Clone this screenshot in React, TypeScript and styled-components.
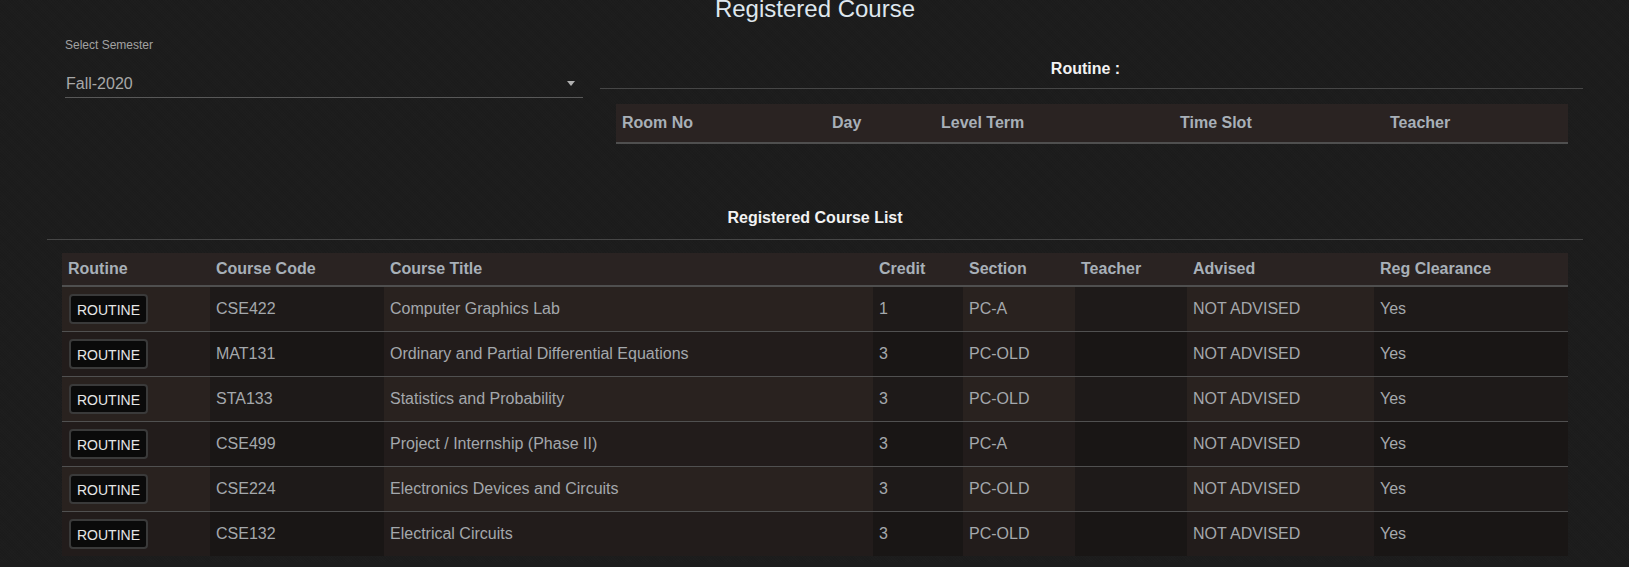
import React from "react";
import styled, { createGlobalStyle } from "styled-components";

const GlobalStyle = createGlobalStyle`
  html, body {
    margin: 0;
    padding: 0;
    background: #1c1c1c;
  }
  body {
    font-family: "Liberation Sans", Arial, sans-serif;
    color: #a4a8ac;
    overflow: hidden;
  }
  * { box-sizing: border-box; }
`;

const Page = styled.div`
  width: 100%;
  min-height: 567px;
  padding: 0 46px 0 47px;
  background-color: #1c1c1c;
  background-image:
    repeating-linear-gradient(45deg, rgba(255,255,255,0.008) 0 1px, transparent 1px 2px),
    repeating-linear-gradient(-45deg, rgba(0,0,0,0.04) 0 1px, transparent 1px 2px);
`;

const Title = styled.h3`
  margin: -5px 0 0;
  font-size: 24px;
  line-height: 28px;
  font-weight: 400;
  text-align: center;
  color: #dfe7ee;
`;

const TopRow = styled.div`
  display: flex;
`;

const LeftCol = styled.div`
  width: 553px;
  padding: 15px 17px 0 18px;
`;

const RightCol = styled.div`
  flex: 1;
  padding-top: 37px;
`;

const Label = styled.div`
  font-size: 12px;
  line-height: 14px;
  color: #a2a2a2;
`;

const SelectBox = styled.div`
  margin-top: 16px;
  padding: 6px 0 4px 1px;
  display: flex;
  align-items: center;
  justify-content: space-between;
  border-bottom: 1px solid #585858;
  font-size: 16px;
  line-height: 19px;
  color: #a8a8a8;
`;

const Caret = styled.span`
  width: 0;
  height: 0;
  margin-right: 8px;
  border-left: 4.5px solid transparent;
  border-right: 4.5px solid transparent;
  border-top: 5px solid #b0b0b0;
`;

const SectionHeading = styled.div<{ $pad: number; $shift?: number }>`
  font-size: 16px;
  line-height: 18px;
  font-weight: 700;
  text-align: center;
  color: #f2f2f2;
  padding-bottom: ${(p) => p.$pad}px;
  padding-right: ${(p) => p.$shift ?? 0}px;
  border-bottom: 1px solid #464646;
`;

const TableWrap = styled.div<{ $top: number; $left: number }>`
  margin: ${(p) => p.$top}px 15px 0 ${(p) => p.$left}px;
`;

const Spacer = styled.div`
  height: 65px;
`;

const Table = styled.table`
  width: 100%;
  border-collapse: collapse;
  table-layout: fixed;
  font-size: 16px;
`;

const HeadCell = styled.th<{ $h: number }>`
  height: ${(p) => p.$h}px;
  padding: 0 6px;
  text-align: left;
  font-weight: 700;
  color: #a8b0b8;
  background: #2a2322;
  border-bottom: 2px solid #4f4f4f;
  white-space: nowrap;
`;

const Row = styled.tr`
  & + & td {
    border-top: 1px solid #505050;
  }
  &:nth-child(odd) td:nth-child(odd) { background: #29221f; }
  &:nth-child(odd) td:nth-child(even) { background: #1e1a19; }
  &:nth-child(even) td:nth-child(odd) { background: #221c1b; }
  &:nth-child(even) td:nth-child(even) { background: #191615; }
`;

const Cell = styled.td`
  height: 45px;
  padding: 0 6px;
  color: #a4a8ac;
  white-space: nowrap;
  vertical-align: middle;
`;

const RoutineButton = styled.button`
  width: 79px;
  height: 30px;
  margin-left: 1px;
  padding: 3px 0 0;
  background: #0a0a0a;
  border: 2px solid #3a3a3a;
  border-radius: 4px;
  color: #e6e6e6;
  font-family: "Liberation Sans", Arial, sans-serif;
  font-size: 14px;
  line-height: 16px;
  cursor: pointer;
`;

const routineCols = [
  { label: "Room No", w: 210 },
  { label: "Day", w: 109 },
  { label: "Level Term", w: 239 },
  { label: "Time Slot", w: 210 },
  { label: "Teacher", w: 184 },
];

const courseCols = [
  { label: "Routine", w: 148 },
  { label: "Course Code", w: 174 },
  { label: "Course Title", w: 489 },
  { label: "Credit", w: 90 },
  { label: "Section", w: 112 },
  { label: "Teacher", w: 112 },
  { label: "Advised", w: 187 },
  { label: "Reg Clearance", w: 194 },
];

const courses = [
  { code: "CSE422", title: "Computer Graphics Lab", credit: "1", section: "PC-A" },
  { code: "MAT131", title: "Ordinary and Partial Differential Equations", credit: "3", section: "PC-OLD" },
  { code: "STA133", title: "Statistics and Probability", credit: "3", section: "PC-OLD" },
  { code: "CSE499", title: "Project / Internship (Phase II)", credit: "3", section: "PC-A" },
  { code: "CSE224", title: "Electronics Devices and Circuits", credit: "3", section: "PC-OLD" },
  { code: "CSE132", title: "Electrical Circuits", credit: "3", section: "PC-OLD" },
];

export default function App() {
  return (
    <>
      <GlobalStyle />
      <Page>
        <Title>Registered Course</Title>
        <TopRow>
          <LeftCol>
            <Label>Select Semester</Label>
            <SelectBox>
              <span>Fall-2020</span>
              <Caret />
            </SelectBox>
          </LeftCol>
          <RightCol>
            <SectionHeading $pad={10} $shift={12}>Routine :</SectionHeading>
            <TableWrap $top={15} $left={16}>
              <Table>
                <colgroup>
                  {routineCols.map((c) => (
                    <col key={c.label} style={{ width: c.w }} />
                  ))}
                </colgroup>
                <thead>
                  <tr>
                    {routineCols.map((c) => (
                      <HeadCell key={c.label} $h={39}>
                        {c.label}
                      </HeadCell>
                    ))}
                  </tr>
                </thead>
              </Table>
            </TableWrap>
          </RightCol>
        </TopRow>
        <Spacer />
        <SectionHeading $pad={12}>Registered Course List</SectionHeading>
        <TableWrap $top={13} $left={15}>
          <Table>
            <colgroup>
              {courseCols.map((c) => (
                <col key={c.label} style={{ width: c.w }} />
              ))}
            </colgroup>
            <thead>
              <tr>
                {courseCols.map((c) => (
                  <HeadCell key={c.label} $h={33}>
                    {c.label}
                  </HeadCell>
                ))}
              </tr>
            </thead>
            <tbody>
              {courses.map((c) => (
                <Row key={c.code}>
                  <Cell>
                    <RoutineButton>ROUTINE</RoutineButton>
                  </Cell>
                  <Cell>{c.code}</Cell>
                  <Cell>{c.title}</Cell>
                  <Cell>{c.credit}</Cell>
                  <Cell>{c.section}</Cell>
                  <Cell></Cell>
                  <Cell>NOT ADVISED</Cell>
                  <Cell>Yes</Cell>
                </Row>
              ))}
            </tbody>
          </Table>
        </TableWrap>
      </Page>
    </>
  );
}
